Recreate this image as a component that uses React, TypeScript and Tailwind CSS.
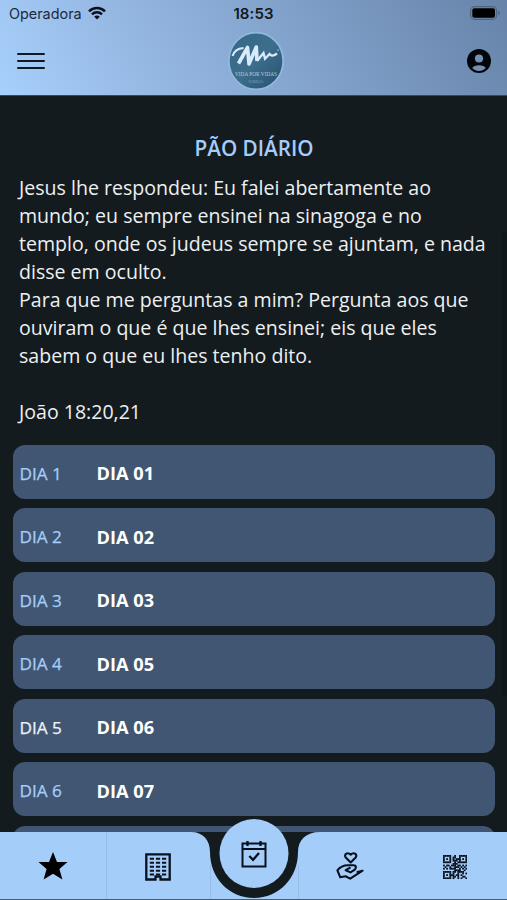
import React from "react";

const days = [
  { label: "DIA 1", title: "DIA 01" },
  { label: "DIA 2", title: "DIA 02" },
  { label: "DIA 3", title: "DIA 03" },
  { label: "DIA 4", title: "DIA 05" },
  { label: "DIA 5", title: "DIA 06", current: true },
  { label: "DIA 6", title: "DIA 07" },
  { label: "", title: "" },
];

const verse = [
  "Jesus lhe respondeu: Eu falei abertamente ao",
  "mundo; eu sempre ensinei na sinagoga e no",
  "templo, onde os judeus sempre se ajuntam, e nada",
  "disse em oculto.",
  "Para que me perguntas a mim? Pergunta aos que",
  "ouviram o que é que lhes ensinei; eis que eles",
  "sabem o que eu lhes tenho dito.",
];

function WifiIcon() {
  return (
    <svg width="18" height="14" viewBox="0 0 18 14" fill="none" stroke="#0b1118" strokeWidth="2.5">
      <path d="M1 5.3C5.5 .8 12.5 .8 17 5.3" />
      <path d="M4 8.4C6.8 5.6 11.2 5.6 14 8.4" />
      <path d="M6.2 10.8C7.8 9.2 10.2 9.2 11.8 10.8L9 13.6Z" fill="#0b1118" stroke="none" />
    </svg>
  );
}

function BatteryIcon() {
  return (
    <svg width="31" height="14" viewBox="0 0 31 14">
      <rect x=".6" y=".6" width="26" height="12.8" rx="4" fill="none" stroke="#4d6380" strokeWidth="1.1" />
      <rect x="2.3" y="2.3" width="22.7" height="9.4" rx="2" fill="#000" />
      <path d="M28.3 4.8c2.2.8 2.2 3.6 0 4.4z" fill="#4d6380" />
    </svg>
  );
}

function Logo() {
  return (
    <svg width="56" height="58" viewBox="0 0 56 58" overflow="visible">
      <defs>
        <linearGradient id="disc" x1="0" y1="0" x2="1" y2="1">
          <stop offset="0" stopColor="#356789" />
          <stop offset=".5" stopColor="#3d6e8b" />
          <stop offset="1" stopColor="#244f70" />
        </linearGradient>
      </defs>
      <ellipse cx="28" cy="29" rx="27.2" ry="28.3" fill="url(#disc)" stroke="#90b9dc" strokeWidth="1.8" />
      <g fill="none" stroke="#d9ebfb" strokeLinejoin="miter" strokeLinecap="butt">
        <path d="M4.5 24C6 19 10 16.5 15.5 16" strokeWidth="2" />
        <path d="M10.5 31.5L19.5 15.5L21 32L28.3 15L29 29" strokeWidth="3.6" strokeLinejoin="round" />
        <path d="M29 29L35.5 21L37 26.8L41.5 22C43 24 45 24.5 49 21.5" strokeWidth="2.3" />
      </g>
      <circle cx="50" cy="18" r=".8" fill="#a6c8df" />
      <text x="28" y="44" textAnchor="middle" textLength="42" lengthAdjust="spacingAndGlyphs" fontFamily="Liberation Serif, serif" fontSize="7" fill="#b3cddd">VIDA POR VIDAS</text>
      <text x="28" y="51" textAnchor="middle" textLength="15" lengthAdjust="spacingAndGlyphs" fontFamily="Liberation Serif, serif" fontSize="4.5" fill="#7ba5bf">IGREJA</text>
    </svg>
  );
}

function AccountIcon() {
  return (
    <svg width="24" height="24" viewBox="0 0 24 24">
      <circle cx="12" cy="12" r="12" fill="#02060a" />
      <circle cx="12" cy="9.5" r="4.1" fill="#7491b5" />
      <path d="M5.3 19C7 15.3 17 15.3 18.7 19C15 23 9 23 5.3 19Z" fill="#7491b5" />
    </svg>
  );
}

function StarIcon() {
  return (
    <svg width="30" height="28" viewBox="0 0 30 28">
      <path d="M15 0L19 9.9H29.5L21.4 17L24.4 27.5L15 21.8L5.6 27.5L8.6 17L.5 9.9H11Z" fill="#000" />
    </svg>
  );
}

function BuildingIcon() {
  return (
    <svg width="26" height="28" viewBox="0 0 26 28" fill="none" stroke="#08111c">
      <path d="M1.3 1.3H24.7V26.5H15.5V23.5H10.5V26.5H1.3Z" strokeWidth="2.3" />
      <path d="M4.8 5.8H21.2M4.8 9.8H21.2M4.8 13.8H21.2M4.8 17.8H21.2M4.8 21.6H21.2" strokeWidth="2" strokeDasharray="4.2 1.9" />
    </svg>
  );
}

function CalendarIcon() {
  return (
    <svg width="26" height="27" viewBox="0 0 26 27" fill="none" stroke="#07101b" strokeWidth="2">
      <path d="M1.5 2.5H24.5V25.5H1.5ZM1.5 8H24.5" />
      <path d="M6.5 0V5M19.5 0V5" strokeWidth="2.3" />
      <path d="M8.3 15L12 18.8L18 12" strokeWidth="2.3" />
    </svg>
  );
}

function GivingIcon() {
  return (
    <svg width="28" height="28" viewBox="0 0 28 28" fill="none" stroke="#07101b" strokeWidth="2.1" strokeLinejoin="round" strokeLinecap="round">
      <path d="M14.7 10.4L10 5.8C7.3 2.9 11.2-.5 14.7 2.6C18.2-.5 22.1 2.9 19.4 5.8Z" />
      <path d="M4.2 25.2L1.4 18.3C3.5 15.5 8 13.2 12 13.2H17.4C21 13.2 20.4 17.2 17.2 18.7L14.5 20.4L9.7 18.2L13.7 15.8M4.2 25.2L9.6 24.2L14.2 26.6L26.6 18.7L21.5 20" />
    </svg>
  );
}

const qrRows = [
  "111110010011111",
  "100010110010001",
  "101010101110101",
  "100010111010001",
  "111110010111111",
  "000000111000000",
  "101101110110101",
  "010010011101010",
  "101011110010101",
  "000000011110010",
  "111110110111100",
  "100010100100101",
  "101011101101000",
  "100010110100110",
  "111110100101001",
];

function QrIcon() {
  return (
    <svg width="24" height="24" viewBox="0 0 15 15" fill="#07101b">
      {qrRows.flatMap((row, y) =>
        [...row].map((cell, x) => cell === "1" && <rect key={`${x}-${y}`} x={x} y={y} width="1.12" height="1.12" />)
      )}
    </svg>
  );
}

export default function App() {
  return (
    <div className="relative flex h-[900px] w-full flex-col overflow-hidden bg-[#141b1f] font-['Open_Sans',sans-serif]">
      <header className="h-24 shrink-0 border-b border-[#334a65] bg-[linear-gradient(60deg,#a8d0fd_0%,#94b7e1_30%,#7f9fc8_62%,#6783a9_100%)]">
        <div className="grid h-7 grid-cols-3 items-center pl-[9px] pr-[6px] font-['Inter',sans-serif]">
          <div className="flex items-center gap-[6px] text-[14.4px] text-[#1d2a3b]">
            <span>Operadora</span>
            <span className="-mt-0.5"><WifiIcon /></span>
          </div>
          <span className="pr-[3px] text-center text-[15px] font-semibold tracking-[0.1px] text-[#111923]">18:53</span>
          <div className="-mt-0.5 flex justify-end"><BatteryIcon /></div>
        </div>
        <div className="grid h-[66px] grid-cols-3 items-center pl-[17px] pr-4">
          <button className="flex w-7 flex-col gap-[4.5px]" aria-label="Menu">
            <span className="h-[2.5px] w-full rounded-full bg-[#101820]" />
            <span className="h-[2.5px] w-full rounded-full bg-[#101820]" />
            <span className="h-[2.5px] w-full rounded-full bg-[#101820]" />
          </button>
          <div className="flex justify-center pl-1"><Logo /></div>
          <div className="flex justify-end"><AccountIcon /></div>
        </div>
      </header>

      <main className="min-h-0 flex-1 overflow-hidden pl-[13px] pr-3 pt-[37px]">
        <h1 className="text-center text-[20.7px] font-semibold leading-[30px] text-[#a5cdfa]">PÃO DIÁRIO</h1>
        <div className="mt-[11px] whitespace-nowrap pl-[6px] text-[19.57px] leading-[28.05px] text-[#edf0f2]">
          {verse.map((line) => <p key={line}>{line}</p>)}
          <p className="mt-7">João 18:20,21</p>
        </div>
        <div className="mt-[18.5px] flex flex-col gap-[9.5px]">
          {days.map((day, i) => (
            <div key={i} className="flex h-[54px] shrink-0 items-center rounded-xl bg-[#415672] pl-[6.5px] pt-1">
              <span className={`w-[77px] text-[17.2px] font-medium [-webkit-text-stroke:0.25px] ${day.current ? "text-[#edf3fa]" : "text-[#a5cdfa]"}`}>{day.label}</span>
              <span className="text-[18.2px] font-bold text-white">{day.title}</span>
            </div>
          ))}
        </div>
      </main>

      <div className="absolute right-0 top-[232px] h-[464px] w-[5px] bg-[#10171c]" />

      <nav className="absolute bottom-0 left-0 h-[82px] w-[507px]">
        <svg className="absolute inset-0" width="507" height="82" viewBox="0 0 507 82">
          <path d="M191 14H320V82H191Z" fill="#141b1f" />
          <path d="M0 14H191C203 14 210 22 210 34C210 60 229 80 254 80C279 80 298 60 298 34C298 22 306 14 320 14H507V81H0Z" fill="#a5cdfa" />
          <path d="M106.5 14V81M210.5 47V81M298.5 47V81" stroke="#97bee9" strokeWidth="1" />
          <path d="M0 81.5H507" stroke="#455e78" />
          <circle cx="254" cy="35.5" r="34.5" fill="#a5cdfa" />
        </svg>
        <div className="relative grid h-full grid-cols-[106px_104px_88px_104px_105px] items-center">
          <div className="flex justify-center pt-[14px]"><StarIcon /></div>
          <div className="flex justify-center pt-[15px]"><BuildingIcon /></div>
          <div className="flex justify-center pb-[10px]"><CalendarIcon /></div>
          <div className="flex justify-center pt-[14px]"><GivingIcon /></div>
          <div className="flex justify-center pt-[15px]"><QrIcon /></div>
        </div>
      </nav>
    </div>
  );
}
